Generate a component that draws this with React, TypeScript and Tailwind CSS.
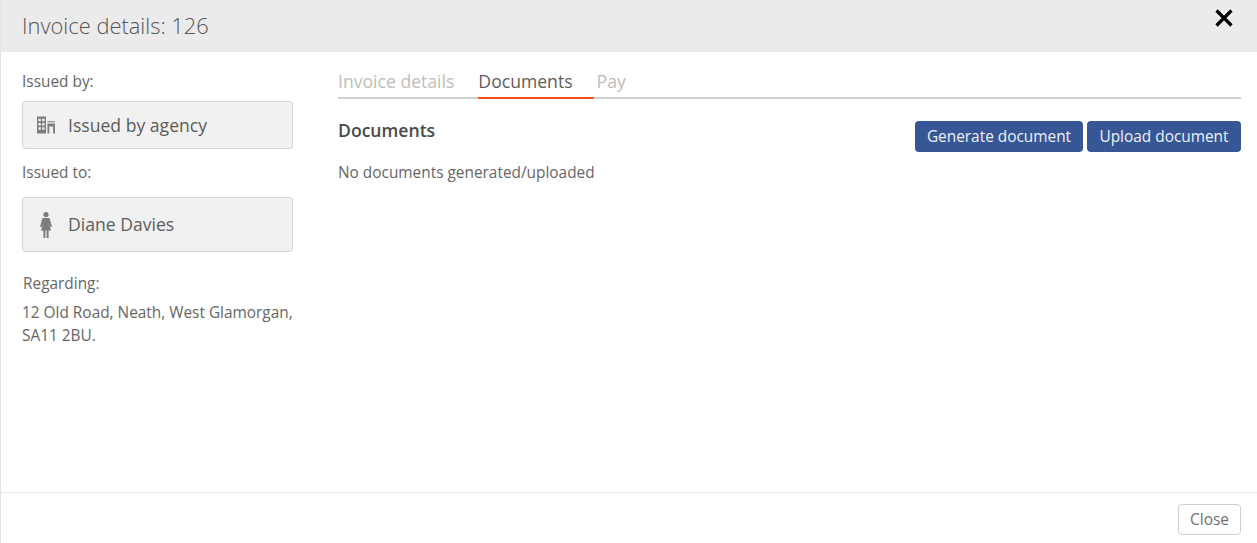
import React from 'react';

const BuildingIcon = () => (
  <svg width="18" height="18" viewBox="0 0 19 18" className="shrink-0" fill="#7d7d7d">
    <path fillRule="evenodd" d="M0 0h9.500v18H0zM1.500 2.500v2.500h2.500V2.500zM5.500 2.500v2.500H8V2.500zM1.500 7v2.500h2.500V7zM5.500 7v2.500H8V7zM1.500 11.500V14h2.500v-2.500zM5.500 11.500V14H8v-2.500z" />
    <path fillRule="evenodd" d="M11 5h8v1.200h-8zM11 7.500h8V18h-2v-7.500h-4V18h-2z" />
  </svg>
);

const PersonIcon = () => (
  <svg width="12" height="26" viewBox="0 0 12 26" className="shrink-0" fill="#7d7d7d">
    <circle cx="6" cy="2.600" r="2.600" />
    <path d="M3.600 6h4.800c.8 0 1.200.5 1.500 1.200L12 14.500l-1.600.5-1.400-4 2 7.500H8.600V26H6.600v-7.500h-1.200V26H3.400v-7.500H1l2-7.500-1.400 4L0 14.500l2.100-7.300C2.400 6.500 2.800 6 3.600 6z" />
  </svg>
);

const PartyBox = ({ icon, name, className }: { icon: React.ReactNode; name: string; className: string }) => (
  <div className={`flex items-center rounded-[3px] border border-[#d5d5d5] bg-[#f1f1f1] pl-[13px] ${className}`}>
    <div className="flex w-[19px] justify-center">{icon}</div>
    <span className="ml-[13px] text-[17.6px] text-[#5c5c5c]">{name}</span>
  </div>
);

export default function App() {
  return (
    <div className="flex h-[543px] w-[1257px] flex-col overflow-hidden border-l border-[#e4e4e4] bg-white font-['Open_Sans',sans-serif] text-[#666]">
      <header className="flex h-[52px] shrink-0 items-center justify-between bg-[#ebebeb] pl-[21px] pr-[23px]">
        <h1 className="text-[21.9px] font-light text-[#555]">Invoice details: 126</h1>
        <button className="mb-[16px] text-black">
          <svg width="20" height="20" viewBox="0 0 20 20" stroke="currentColor" strokeWidth="3.2" fill="none">
            <path d="M2.500 2.500l15 15M17.500 2.500l-15 15" />
          </svg>
        </button>
      </header>

      <main className="flex flex-1 pl-[21px] pr-[16px]">
        <aside className="w-[271px] shrink-0 text-[15.4px]">
          <p className="mt-[20px] leading-[20px]">Issued by:</p>
          <PartyBox icon={<BuildingIcon />} name="Issued by agency" className="mt-[9px] h-[48px]" />
          <p className="mt-[14px] leading-[20px]">Issued to:</p>
          <PartyBox icon={<PersonIcon />} name="Diane Davies" className="mt-[14px] h-[55px]" />
          <p className="ml-px mt-[22px] leading-[20px]">Regarding:</p>
          <p className="mt-[7px] leading-[23px]">12 Old Road, Neath, West Glamorgan, SA11 2BU.</p>
        </aside>

        <section className="ml-[45px] flex-1">
          <nav className="mt-[16px] flex h-[31px] border-b-2 border-[#cfcfcf] text-[17.6px]">
            <span className="mr-[24px] text-[#bdbdbd]">Invoice details</span>
            <span className="-mb-[2px] mr-[3px] border-b-2 border-[#f4511e] pr-[21px] text-[#5c5c5c]">Documents</span>
            <span className="text-[#bdbdbd]">Pay</span>
          </nav>
          <div className="mt-[20px] flex items-start justify-between">
            <h2 className="text-[17.6px] font-semibold leading-[22px] text-[#4a4a4a]">Documents</h2>
            <div className="mt-[2px] flex gap-[4px]">
              <button className="h-[31px] w-[168px] rounded-[4px] bg-[#375696] text-[15.4px] font-medium text-[#eef1f7]">Generate document</button>
              <button className="h-[31px] w-[154px] rounded-[4px] bg-[#375696] text-[15.4px] font-medium text-[#eef1f7]">Upload document</button>
            </div>
          </div>
          <p className="mt-[11px] text-[15.4px] leading-[20px]">No documents generated/uploaded</p>
        </section>
      </main>

      <footer className="flex h-[51px] shrink-0 items-start justify-end border-t border-[#e4e4e4] pr-[16px] pt-[11px]">
        <button className="h-[31px] w-[63px] rounded-[4px] border border-[#cfcfcf] bg-white text-[15.5px] text-[#707070]">Close</button>
      </footer>
    </div>
  );
}
